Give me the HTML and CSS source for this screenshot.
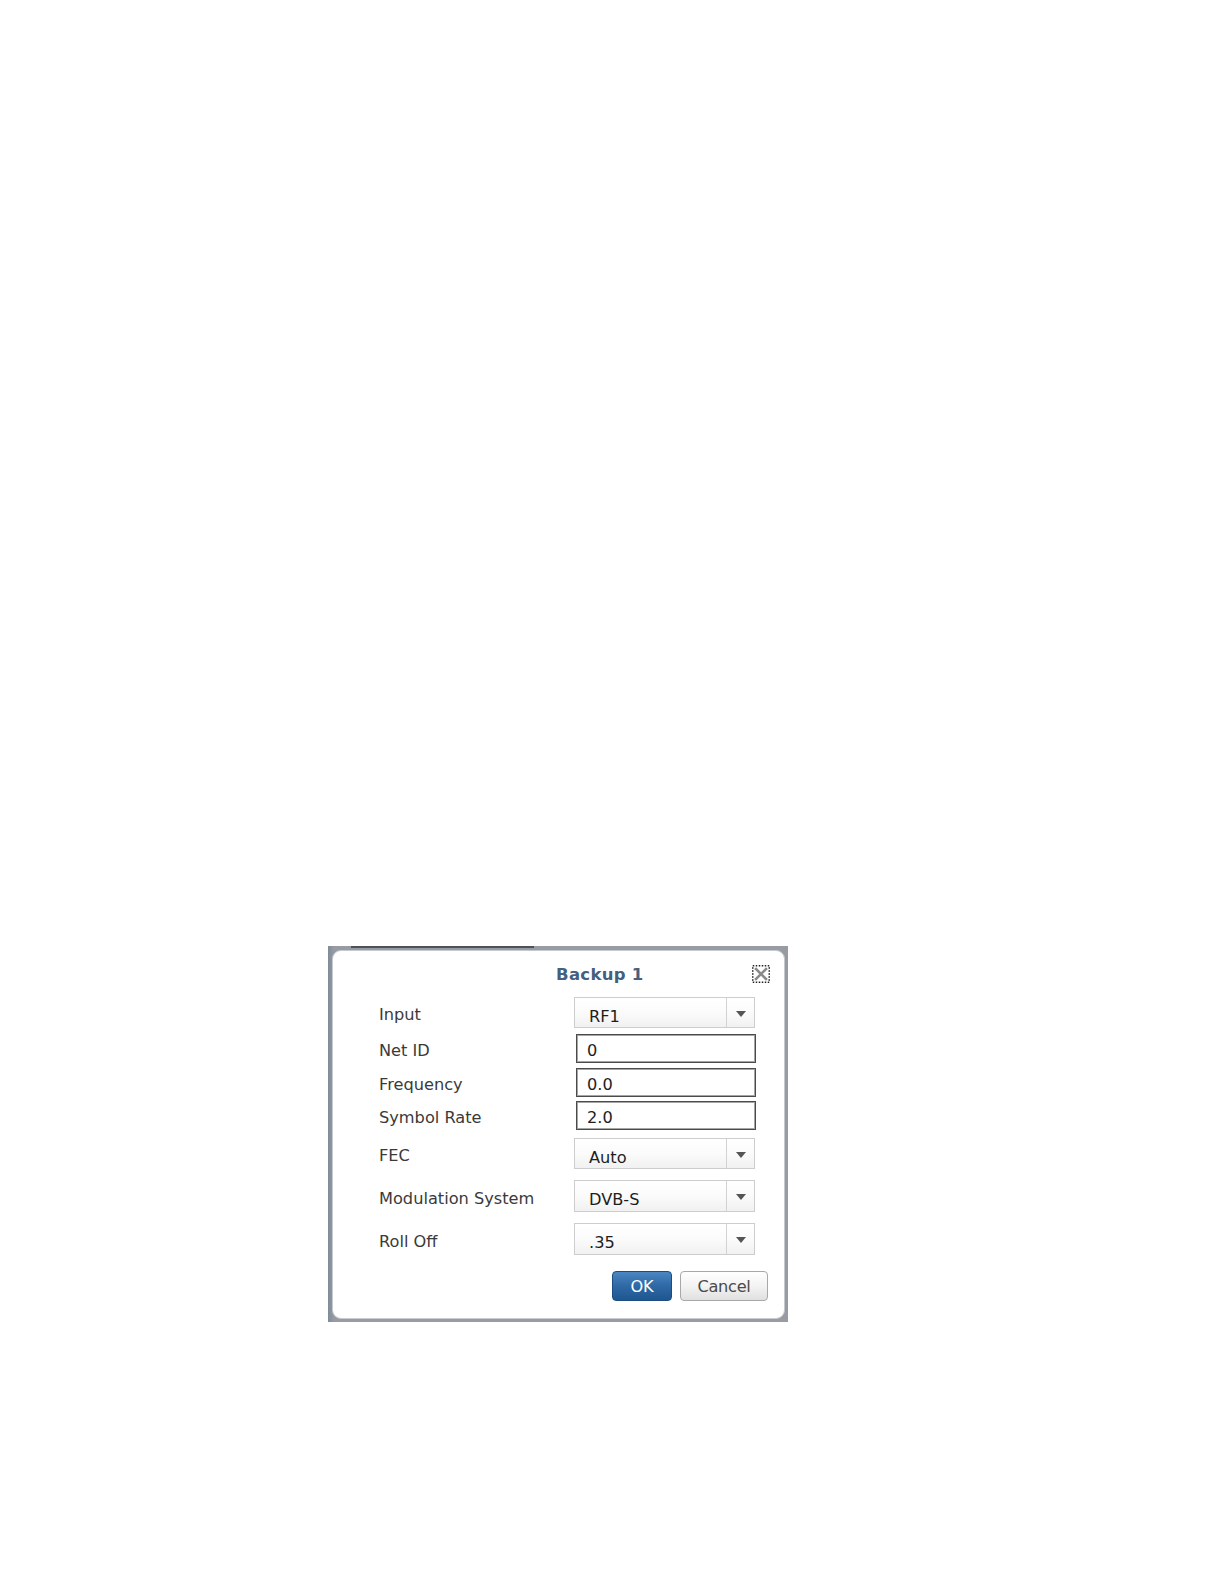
FILE: index.html
```html
<!DOCTYPE html>
<html>
<head>
<meta charset="utf-8">
<link rel="stylesheet" href="styles.css">
</head>
<body>
<div class="page">
  <div class="frame">
    <div class="frame-line"></div>
    <div class="dialog">
      <div class="title-row">
        <div class="title">Backup 1</div>
        <button class="close" aria-label="Close">
          <svg width="18" height="18" viewBox="0 0 18 18">
            <rect x="0.75" y="0.75" width="16.5" height="16.5" fill="#fff" stroke="#222" stroke-width="1.5" stroke-dasharray="1.5 1.5"/>
            <path d="M4 4 L14 14 M14 4 L4 14" stroke="#8a8a8a" stroke-width="2.6" stroke-linecap="square"/>
          </svg>
        </button>
      </div>
      <div class="form">
        <div class="row r-input"><div class="label">Input</div><div class="select"><span class="val">RF1</span><span class="arrow"></span></div></div>
        <div class="row r-netid"><div class="label">Net ID</div><div class="text">0</div></div>
        <div class="row r-freq"><div class="label">Frequency</div><div class="text">0.0</div></div>
        <div class="row r-sym"><div class="label">Symbol Rate</div><div class="text">2.0</div></div>
        <div class="row r-fec"><div class="label">FEC</div><div class="select"><span class="val">Auto</span><span class="arrow"></span></div></div>
        <div class="row r-mod"><div class="label">Modulation System</div><div class="select tall"><span class="val">DVB-S</span><span class="arrow"></span></div></div>
        <div class="row r-roll"><div class="label">Roll Off</div><div class="select tall"><span class="val">.35</span><span class="arrow"></span></div></div>
      </div>
      <div class="buttons">
        <button class="btn ok">OK</button>
        <button class="btn cancel">Cancel</button>
      </div>
    </div>
  </div>
</div>
</body>
</html>
```

FILE: styles.css
```css
html, body {
  margin: 0;
  padding: 0;
  background: #ffffff;
}

body {
  font-family: "DejaVu Sans", Verdana, sans-serif;
  width: 1225px;
  height: 1584px;
}

.page {
  padding-top: 946px;
  padding-left: 328px;
}

.frame {
  width: 460px;
  height: 376px;
  box-sizing: border-box;
  background: linear-gradient(to right, #7f8b99 0px, #989ca2 6px, #989ca2 100%);
  padding: 0 3px 3px 4px;
  display: flex;
  flex-direction: column;
}

.frame-line {
  margin-left: 19px;
  width: 183px;
  height: 2px;
  background: #4d5257;
  flex: none;
}

.dialog {
  margin-top: 2px;
  flex: 1;
  background: #ffffff;
  border-radius: 9px;
  border: 1px solid #c5cad0;
  box-sizing: border-box;
  display: flex;
  flex-direction: column;
}

.title-row {
  height: 46px;
  display: flex;
  align-items: center;
  padding-left: 223px;
  padding-top: 0;
  box-sizing: border-box;
  flex: none;
}

.title {
  font-weight: bold;
  font-size: 16.5px;
  color: #45607f;
  letter-spacing: 0.3px;
}

.close {
  margin-left: auto;
  margin-right: 14px;
  width: 18px;
  height: 18px;
  padding: 0;
  border: 0;
  background: none;
  display: block;
}

.close svg {
  display: block;
}

.form {
  padding-left: 46px;
  display: flex;
  flex-direction: column;
}

.row {
  display: flex;
  align-items: center;
}

.label {
  width: 195px;
  font-size: 16.2px;
  color: #3a3a3a;
  padding-top: 4px;
}

.r-input { margin-top: 0; }
.r-netid { margin-top: 6px; }
.r-freq { margin-top: 5px; }
.r-sym { margin-top: 4px; }
.r-fec { margin-top: 8px; }
.r-mod { margin-top: 11px; }
.r-roll { margin-top: 11px; }

.select {
  width: 181px;
  height: 31px;
  box-sizing: border-box;
  border: 1px solid #cdcdcd;
  background: linear-gradient(to bottom, #ffffff 0%, #fbfbfb 50%, #f1f1f1 100%);
  display: flex;
  align-items: stretch;
  box-shadow: inset 0 1px 0 #ffffff;
}

.select.tall {
  height: 32px;
}

.select .val {
  flex: 1;
  font-size: 16.2px;
  color: #1e1e1e;
  padding-left: 14px;
  padding-top: 8px;
  line-height: 22px;
  border-right: 1px solid #d2d2d2;
}

.select .arrow {
  width: 27px;
  position: relative;
}

.select .arrow::after {
  content: "";
  position: absolute;
  left: 9px;
  top: 13px;
  border-left: 5px solid transparent;
  border-right: 5px solid transparent;
  border-top: 6px solid #555555;
}

.text {
  margin-left: 2px;
  width: 180px;
  height: 29px;
  box-sizing: border-box;
  border: 1px solid #4b4b4b;
  box-shadow: inset 0 0 0 1px #a5a5a5;
  font-size: 16.2px;
  color: #1e1e1e;
  padding-left: 10px;
  line-height: 27px;
  padding-top: 2px;
}

.buttons {
  display: flex;
  justify-content: flex-end;
  gap: 8px;
  margin-top: 16px;
  padding-right: 16px;
}

.btn {
  height: 30px;
  box-sizing: border-box;
  font-family: "DejaVu Sans", Verdana, sans-serif;
  font-size: 16.2px;
  border-radius: 4px;
  padding: 0;
  letter-spacing: -0.3px;
}

.ok {
  width: 60px;
  color: #ffffff;
  background: linear-gradient(to bottom, #4a86c2 0%, #2e69a6 50%, #1f5690 100%);
  border: 1px solid #1d4d80;
  font-weight: normal;
}

.cancel {
  width: 88px;
  color: #4a4a4a;
  background: linear-gradient(to bottom, #ffffff 0%, #f3f3f3 50%, #e0e0e0 100%);
  border: 1px solid #a8a8a8;
}
```
